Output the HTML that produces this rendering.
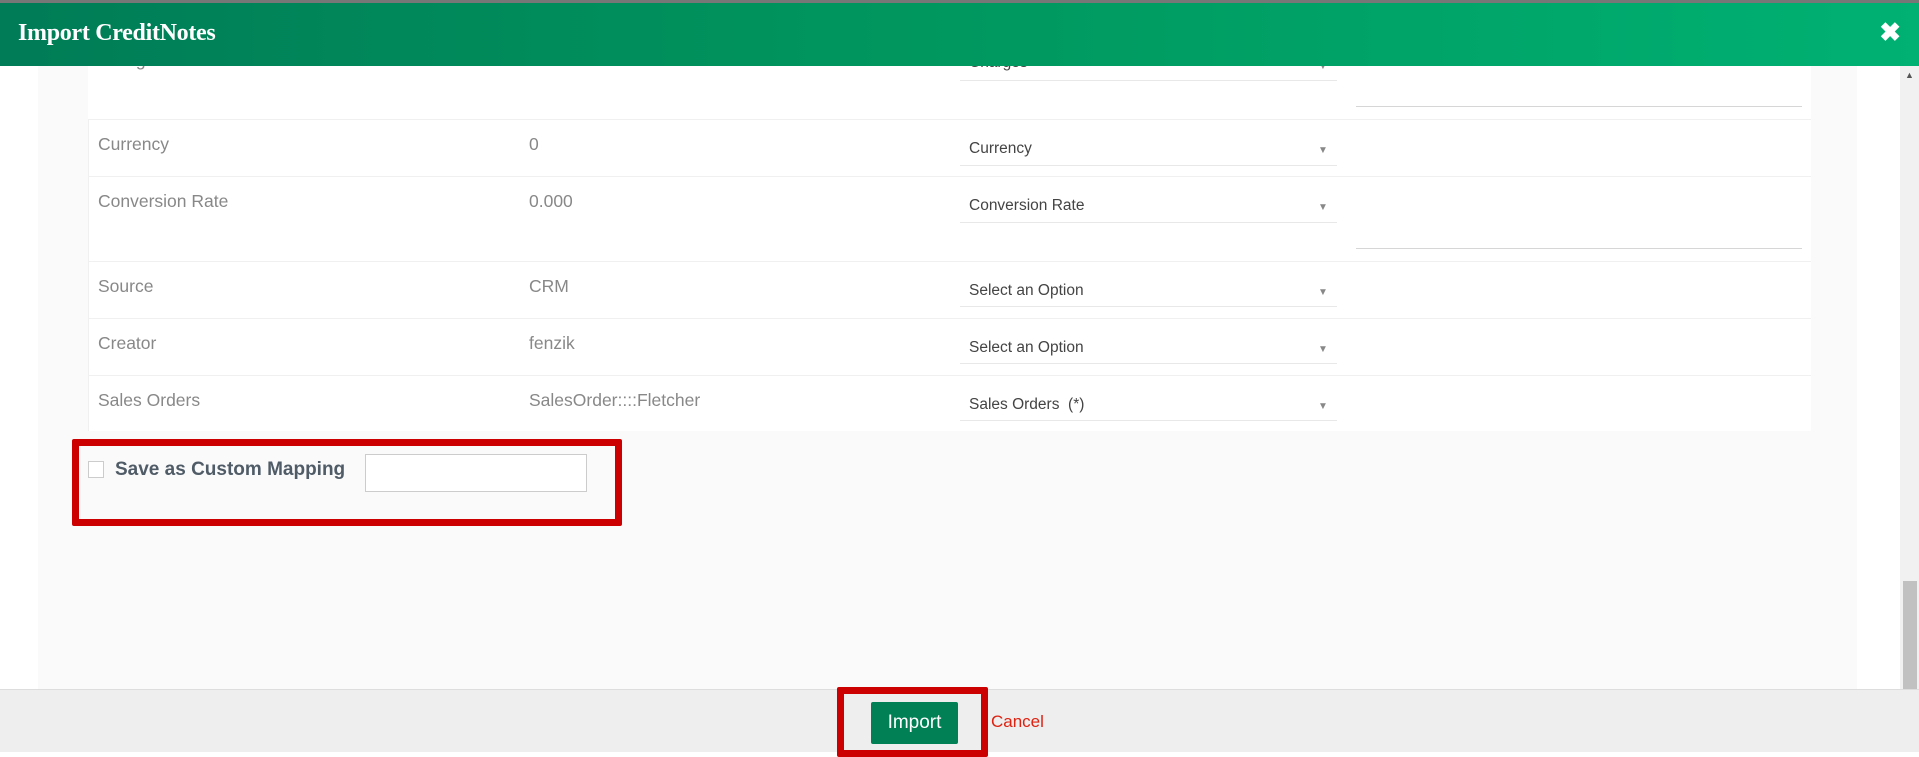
<!DOCTYPE html>
<html><head><meta charset="utf-8"><style>
*{box-sizing:border-box;margin:0;padding:0}
body{width:1919px;height:752px;position:relative;overflow:hidden;background:#fff;font-family:"Liberation Sans",sans-serif}
.a{position:absolute}
.hdr{left:0;top:0;width:1919px;height:66px;background:linear-gradient(90deg,#007c56,#00985f 50%,#00b173);border-top:3px solid #777}
.hdr .t{left:18px;top:17px;color:#fff;font-family:"Liberation Serif",serif;font-size:24px;font-weight:bold;letter-spacing:-0.3px}
.lbl{color:#888;font-size:17.5px}
.sel{color:#444;font-size:15.5px}
.arr{color:#888;font-size:10px}
.ul{height:1px;background:#e8e8e8}
.rb{height:1px;background:#f0f0f0}
</style></head><body>
<div class="a" style="left:38px;top:66px;width:1819px;height:623px;background:#fafafa"></div>
<div class="a" style="left:88px;top:66px;width:1723px;height:365px;background:#fff"></div>
<div class="a" style="left:1900px;top:66px;width:19px;height:623px;background:#f1f1f1"></div>
<div class="a" style="left:1905px;top:70px;color:#555;font-size:9px">▲</div>
<div class="a" style="left:1903px;top:581px;width:14px;height:108px;background:#c1c1c1"></div>

<div class="a sel" style="left:969px;top:54px">Charges</div>
<div class="a arr" style="left:1318px;top:61px">▼</div>
<div class="a" style="left:98px;top:50px;color:#888;font-size:17.5px">Charges</div>
<div class="a ul" style="left:960px;top:80px;width:377px"></div>
<div class="a ul" style="left:1356px;top:106px;width:446px;background:#d6d6d6"></div>
<div class="a rb" style="left:88px;top:119px;width:1723px"></div>
<div class="a rb" style="left:88px;top:176px;width:1723px"></div>
<div class="a rb" style="left:88px;top:261px;width:1723px"></div>
<div class="a rb" style="left:88px;top:318px;width:1723px"></div>
<div class="a rb" style="left:88px;top:375px;width:1723px"></div>
<div class="a" style="left:88px;top:119px;width:1px;height:312px;background:#f0f0f0"></div>

<div class="a lbl" style="left:98px;top:134px">Currency</div>
<div class="a lbl" style="left:529px;top:134px">0</div>
<div class="a sel" style="left:969px;top:140px">Currency</div>
<div class="a arr" style="left:1318px;top:145px">▼</div>
<div class="a ul" style="left:960px;top:165px;width:377px"></div>

<div class="a lbl" style="left:98px;top:191px">Conversion Rate</div>
<div class="a lbl" style="left:529px;top:191px">0.000</div>
<div class="a sel" style="left:969px;top:197px">Conversion Rate</div>
<div class="a arr" style="left:1318px;top:202px">▼</div>
<div class="a ul" style="left:960px;top:222px;width:377px"></div>
<div class="a ul" style="left:1356px;top:248px;width:446px;background:#d6d6d6"></div>

<div class="a lbl" style="left:98px;top:276px">Source</div>
<div class="a lbl" style="left:529px;top:276px">CRM</div>
<div class="a sel" style="left:969px;top:282px">Select an Option</div>
<div class="a arr" style="left:1318px;top:287px">▼</div>
<div class="a ul" style="left:960px;top:306px;width:377px"></div>

<div class="a lbl" style="left:98px;top:333px">Creator</div>
<div class="a lbl" style="left:529px;top:333px">fenzik</div>
<div class="a sel" style="left:969px;top:339px">Select an Option</div>
<div class="a arr" style="left:1318px;top:344px">▼</div>
<div class="a ul" style="left:960px;top:363px;width:377px"></div>

<div class="a lbl" style="left:98px;top:390px">Sales Orders</div>
<div class="a lbl" style="left:529px;top:390px">SalesOrder::::Fletcher</div>
<div class="a sel" style="left:969px;top:396px">Sales Orders&nbsp; (*)</div>
<div class="a arr" style="left:1318px;top:401px">▼</div>
<div class="a ul" style="left:960px;top:420px;width:377px"></div>

<div class="hdr a"><div class="a t">Import CreditNotes</div>
<div class="a" style="right:18px;top:14px;color:#fff;font-size:26px;font-weight:bold">✖</div></div>

<div class="a" style="left:72px;top:439px;width:550px;height:87px;border:7px solid #c00;border-radius:2px"></div>
<div class="a" style="left:88px;top:461px;width:16px;height:17px;border:1px solid #ccc;background:#fff"></div>
<div class="a" style="left:115px;top:459px;color:#4f5b66;font-size:19px;font-weight:bold">Save as Custom Mapping</div>
<div class="a" style="left:365px;top:454px;width:222px;height:38px;border:1px solid #ccc;background:#fff"></div>

<div class="a" style="left:0;top:689px;width:1919px;height:63px;background:#eee;border-top:1px solid #ddd"></div>
<div class="a" style="left:837px;top:687px;width:151px;height:70px;border:7px solid #c00;border-radius:2px"></div>
<div class="a" style="left:871px;top:702px;width:87px;height:42px;background:#018055;border-radius:2px;color:#fff;font-size:19px;text-align:center;line-height:42px">Import</div>
<div class="a" style="left:991px;top:712px;color:#d21;font-size:17px">Cancel</div>
</body></html>
